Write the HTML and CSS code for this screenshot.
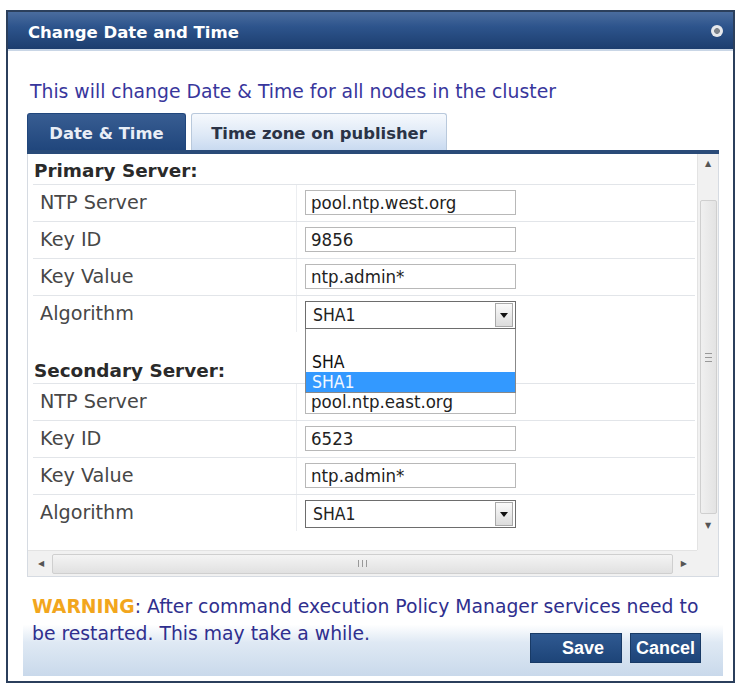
FILE: index.html
```html
<!DOCTYPE html>
<html lang="en">

<head>
  <meta charset="UTF-8">
  <meta name="viewport" content="width=device-width, initial-scale=1.0">
  <title>Change Date and Time</title>
  <link rel="stylesheet" href="styles.css">
</head>

<body>
  <div class="dialog">
    <div class="dialog-header">
      <span class="dialog-title">Change Date and Time</span>
      <span class="close-btn"></span>
    </div>

    <div class="dialog-body">
      <p class="intro">This will change Date &amp; Time for all nodes in the cluster</p>

      <div class="tabs">
        <div class="tab active">Date &amp; Time</div>
        <div class="tab">Time zone on publisher</div>
      </div>

      <div class="panel">
        <div class="panel-content">
          <div class="section-title">Primary Server:</div>
          <div class="field-row">
            <div class="field-label">NTP Server</div>
            <div class="field-value"><input type="text" value="pool.ntp.west.org"></div>
          </div>
          <div class="field-row">
            <div class="field-label">Key ID</div>
            <div class="field-value"><input type="text" value="9856"></div>
          </div>
          <div class="field-row">
            <div class="field-label">Key Value</div>
            <div class="field-value"><input type="text" value="ntp.admin*"></div>
          </div>
          <div class="field-row">
            <div class="field-label">Algorithm</div>
            <div class="field-value">
              <div class="select open">
                <span>SHA1</span>
                <span class="select-btn"></span>
                <!-- open dropdown list -->
                <ul class="select-list">
                  <li>SHA</li>
                  <li class="selected">SHA1</li>
                </ul>
              </div>
            </div>
          </div>

          <div class="section-title second">Secondary Server:</div>
          <div class="field-row">
            <div class="field-label">NTP Server</div>
            <div class="field-value"><input type="text" value="pool.ntp.east.org"></div>
          </div>
          <div class="field-row">
            <div class="field-label">Key ID</div>
            <div class="field-value"><input type="text" value="6523"></div>
          </div>
          <div class="field-row">
            <div class="field-label">Key Value</div>
            <div class="field-value"><input type="text" value="ntp.admin*"></div>
          </div>
          <div class="field-row">
            <div class="field-label">Algorithm</div>
            <div class="field-value">
              <div class="select">
                <span>SHA1</span>
                <span class="select-btn"></span>
              </div>
            </div>
          </div>
        </div>

        <div class="vscroll">
          <span class="arrow">&#9650;</span>
          <div class="vthumb"><span class="grip"></span></div>
          <span class="arrow">&#9660;</span>
        </div>

        <div class="hscroll">
          <span class="arrow">&#9664;</span>
          <div class="hthumb"><span class="grip"></span></div>
          <span class="arrow">&#9654;</span>
        </div>
        <div class="corner"></div>
      </div>
    </div>

    <div class="dialog-bottom">
      <p class="warning"><b>WARNING</b>: After command execution Policy Manager services need to be restarted. This
        may take a while.</p>
      <div class="dialog-footer">
        <button class="btn save">Save</button>
        <button class="btn">Cancel</button>
      </div>
    </div>
  </div>
</body>

</html>
```

FILE: styles.css
```css
/* Base styles */
body {
  margin: 0;
  background: #fff;
  font-family: "DejaVu Sans", sans-serif;
  font-size: 16px;
}

.dialog {
  width: 725px;
  margin: 10px 0 0 6px;
  border: 2px solid #2b3f5c;
  background: #fff;
}

.dialog-header {
  height: 39px;
  display: flex;
  align-items: center;
  justify-content: space-between;
  padding: 4px 10px 0 20px;
  box-sizing: border-box;
  background: linear-gradient(#4a6c9e, #2d548c 40%, #1c3d6e);
  border-bottom: 2px solid #c9d6e6;
}

.dialog-title {
  color: #fff;
  font-weight: bold;
  font-size: 16.5px;
}

.close-btn {
  width: 12px;
  height: 12px;
  border-radius: 50%;
  background: radial-gradient(#7d838b 30%, #e6e8ec 38%);
  margin-top: -4px;
}

.dialog-body {
  padding: 0 14px 0 19px;
}

.intro {
  margin: 0;
  padding: 30px 0 10px 3px;
  line-height: 22px;
  color: #38369c;
  font-size: 18.8px;
}

/* Tabs */
.tabs {
  display: flex;
  gap: 5px;
  border-bottom: 4px solid #2a4b78;
}

.tab {
  height: 36px;
  line-height: 39px;
  font-weight: bold;
  font-size: 16.4px;
  text-align: center;
  color: #2a3346;
  background: linear-gradient(#f6f9fd, #dde8f6 60%, #c9daf0);
  border: 1px solid #b9c9dc;
  border-bottom: none;
  border-radius: 3px 3px 0 0;
  width: 254px;
}

.tab.active {
  width: 157px;
  color: #e9eef6;
  background: linear-gradient(#385d92, #20467c);
  border-color: #20467c;
}

/* Scroll panel */
.panel {
  display: grid;
  grid-template-columns: 1fr 21px;
  grid-template-rows: 396px 26px;
  border: 1px solid #d6dbe2;
  border-top: none;
}

.panel-content {
  padding: 0 2px 0 5px;
}

.section-title {
  font-weight: bold;
  font-size: 18.4px;
  color: #2a2a2a;
  height: 30px;
  line-height: 34px;
  padding-left: 1px;
}

.section-title.second {
  margin-top: 22px;
  height: 29px;
  line-height: 33px;
}

.field-row {
  display: grid;
  grid-template-columns: 264px 1fr;
  height: 37px;
  border-top: 1px solid #e2e5e9;
  box-sizing: border-box;
}

.field-label {
  padding-left: 7px;
  line-height: 35px;
  font-size: 19.2px;
  color: #474747;
  border-right: 1px solid #eceef1;
}

.field-value {
  padding: 5px 0 0 8px;
}

.field-value input {
  width: 211px;
  height: 25px;
  box-sizing: border-box;
  border: 1px solid #b8b8b8;
  padding: 0 5px;
  font-family: "DejaVu Sans Condensed", "DejaVu Sans", sans-serif;
  font-size: 18.5px;
  color: #222;
  background: #fff;
}

.select {
  position: relative;
  width: 211px;
  height: 28px;
  box-sizing: border-box;
  border: 1px solid #6d6d6d;
  display: flex;
  align-items: center;
  justify-content: space-between;
  padding-left: 7px;
  font-family: "DejaVu Sans Condensed", "DejaVu Sans", sans-serif;
  font-size: 17.5px;
  color: #222;
  background: #fff;
}

.select-btn {
  width: 16px;
  height: 22px;
  margin-right: 2px;
  border: 1px solid #a9a9a9;
  background: linear-gradient(#fafafa, #dcdcdc);
  position: relative;
}

.select-btn::after {
  content: "";
  position: absolute;
  left: 4px;
  top: 9px;
  border: 4px solid transparent;
  border-top: 5px solid #111;
}

.select-list {
  position: absolute;
  left: -1px;
  top: 27px;
  width: 211px;
  margin: 0;
  padding: 23px 0 0;
  list-style: none;
  background: #fff;
  border: 1px solid #888;
  border-top: none;
  box-sizing: border-box;
  z-index: 2;
}

.select-list li {
  height: 20px;
  line-height: 21px;
  padding-left: 6px;
  color: #111;
}

.select-list li.selected {
  background: #3399ff;
  color: #f3f8ff;
}

/* Fake scrollbars */
.vscroll {
  display: flex;
  flex-direction: column;
  align-items: center;
  background: #f1f1f1;
  border-left: 1px solid #e3e3e3;
  padding-bottom: 14px;
}

.arrow {
  font-size: 8px;
  color: #555;
  height: 20px;
  line-height: 20px;
}

.vthumb {
  flex: 1;
  width: 15px;
  margin: 26px 0 2px;
  background: linear-gradient(90deg, #f0f0f0, #e3e3e3);
  border: 1px solid #cfcfcf;
  border-radius: 2px;
  display: flex;
  align-items: center;
  justify-content: center;
}

.vthumb .grip {
  width: 7px;
  height: 7px;
  border-top: 1px solid #999;
  border-bottom: 1px solid #999;
  background: linear-gradient(transparent 40%, #999 40%, #999 60%, transparent 60%);
}

.hscroll {
  display: flex;
  align-items: center;
  padding: 0 10px;
  gap: 8px;
  background: #f1f1f1;
  border-top: 1px solid #e3e3e3;
}

.hthumb {
  flex: 1;
  height: 18px;
  background: linear-gradient(#f4f4f4, #e1e1e1);
  border: 1px solid #cfcfcf;
  border-radius: 2px;
  display: flex;
  align-items: center;
  justify-content: center;
}

.hthumb .grip {
  width: 7px;
  height: 7px;
  border-left: 1px solid #999;
  border-right: 1px solid #999;
  background: linear-gradient(90deg, transparent 40%, #999 40%, #999 60%, transparent 60%);
}

.corner {
  background: #f1f1f1;
}

/* Warning + footer share one shaded block */
.dialog-bottom {
  margin: 0 10px 5px 15px;
  background: linear-gradient(#fff 48%, #dfe9f4 66%, #c9d9eb);
}

.warning {
  margin: 0;
  padding: 16px 20px 0 9px;
  font-size: 18.8px;
  line-height: 27px;
  color: #2f2f8e;
}

.warning b {
  color: #f2a61d;
}

.dialog-footer {
  margin-top: -14px;
  height: 43px;
  display: flex;
  align-items: flex-start;
  justify-content: flex-end;
  gap: 8px;
  padding-right: 22px;
}

.btn {
  height: 30px;
  padding: 0 5px;
  font-family: "Liberation Sans", Arial, sans-serif;
  font-weight: bold;
  font-size: 18px;
  color: #fff;
  background: linear-gradient(#2f5991, #1d4478);
  border: 1px solid #183a66;
}

.btn.save {
  width: 92px;
  text-align: right;
  padding-right: 17px;
}
```
